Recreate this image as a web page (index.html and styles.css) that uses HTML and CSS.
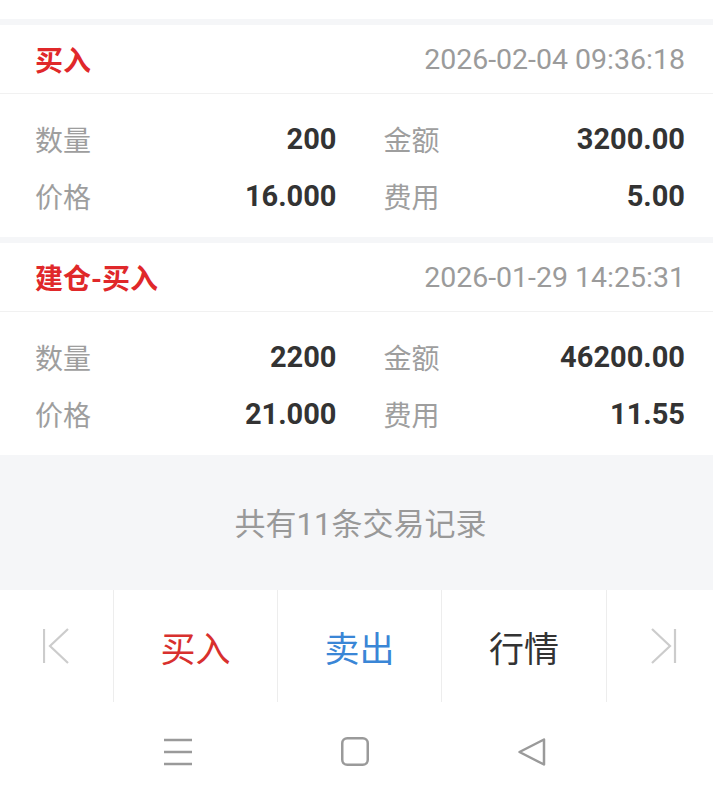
FILE: index.html
```html
<!DOCTYPE html>
<html lang="zh-CN">

<head>
    <meta charset="UTF-8">
    <meta name="viewport" content="width=device-width, initial-scale=1.0">
    <title>交易记录</title>
    <link rel="stylesheet" href="styles.css">
</head>

<body>
    <div class="top-gap"></div>

    <div class="record">
        <div class="record-head">
            <span class="type">买入</span>
            <span class="time">2026-02-04 09:36:18</span>
        </div>
        <div class="record-body">
            <div class="cell"><span class="label">数量</span><span class="value">200</span></div>
            <div class="cell"><span class="label">金额</span><span class="value">3200.00</span></div>
            <div class="cell"><span class="label">价格</span><span class="value">16.000</span></div>
            <div class="cell"><span class="label">费用</span><span class="value">5.00</span></div>
        </div>
    </div>

    <div class="record">
        <div class="record-head">
            <span class="type">建仓-买入</span>
            <span class="time">2026-01-29 14:25:31</span>
        </div>
        <div class="record-body">
            <div class="cell"><span class="label">数量</span><span class="value">2200</span></div>
            <div class="cell"><span class="label">金额</span><span class="value">46200.00</span></div>
            <div class="cell"><span class="label">价格</span><span class="value">21.000</span></div>
            <div class="cell"><span class="label">费用</span><span class="value">11.55</span></div>
        </div>
    </div>

    <div class="summary">共有11条交易记录</div>

    <div class="action-bar">
        <div class="action nav-first">
            <svg width="26" height="36" viewBox="0 0 26 36">
                <line x1="1" y1="1" x2="1" y2="35" />
                <polyline points="25,1 7,18 25,35" />
            </svg>
        </div>
        <div class="action buy">买入</div>
        <div class="action sell">卖出</div>
        <div class="action quote">行情</div>
        <div class="action nav-last">
            <svg width="26" height="36" viewBox="0 0 26 36">
                <polyline points="1,1 19,18 1,35" />
                <line x1="24" y1="1" x2="24" y2="35" />
            </svg>
        </div>
    </div>

    <div class="system-nav">
        <div class="sys-btn">
            <svg width="28" height="28" viewBox="0 0 28 28">
                <line x1="0" y1="2" x2="28" y2="2" />
                <line x1="0" y1="14" x2="28" y2="14" />
                <line x1="0" y1="26" x2="28" y2="26" />
            </svg>
        </div>
        <div class="sys-btn">
            <svg width="28" height="29" viewBox="0 0 28 29">
                <rect x="1.25" y="1.25" width="25.5" height="26.5" rx="5" />
            </svg>
        </div>
        <div class="sys-btn">
            <svg width="28" height="28" viewBox="0 0 28 28">
                <path d="M26 1.5 L1.5 14 L26 26.5 Z" />
            </svg>
        </div>
    </div>
</body>

</html>
```

FILE: styles.css
```css
body {
    font-family: Roboto, "Noto Sans CJK SC", sans-serif;
    margin: 0;
    width: 713px;
    height: 801px;
    background-color: #f5f6f8;
    display: flex;
    flex-direction: column;
    overflow: hidden;
}

.top-gap {
    height: 19px;
    background-color: #ffffff;
}

.record {
    background-color: #ffffff;
    margin-top: 6px;
}

.record-head {
    height: 68px;
    display: flex;
    justify-content: space-between;
    align-items: center;
    padding: 0 28px 0 35px;
    border-bottom: 1px solid #f1f1f1;
}

.type {
    color: #e0282a;
    font-size: 28px;
    font-weight: bold;
}

.time {
    color: #9b9b9b;
    font-size: 28.5px;
}

.record-body {
    display: grid;
    grid-template-columns: 1fr 1fr;
    grid-auto-rows: 57px;
    column-gap: 47px;
    padding: 16px 28px 13px 35px;
}

.cell {
    display: flex;
    justify-content: space-between;
    align-items: center;
}

.label {
    color: #9e9e9e;
    font-size: 28px;
}

.value {
    color: #333333;
    font-size: 29px;
    font-weight: bold;
}

.summary {
    flex-grow: 1;
    display: flex;
    justify-content: center;
    align-items: center;
    color: #999999;
    font-size: 31px;
    padding: 0 0 2px 8px;
}

.action-bar {
    height: 112px;
    display: grid;
    grid-template-columns: 113px 164px 164px 165px 1fr;
    background-color: #ffffff;
}

.action {
    display: flex;
    justify-content: center;
    align-items: center;
    font-size: 35px;
    border-left: 1px solid #ededed;
}

.action svg {
    fill: none;
    stroke: #cccccc;
    stroke-width: 2.2;
}

.nav-first {
    border-left: none;
    justify-content: flex-start;
    padding-left: 43px;
}

.nav-last {
    justify-content: flex-start;
    padding-left: 44px;
}

.buy {
    color: #d8302e;
}

.sell {
    color: #3a86d6;
}

.quote {
    color: #333333;
}

.system-nav {
    height: 99px;
    background-color: #ffffff;
    display: grid;
    grid-template-columns: repeat(3, 177px);
    justify-content: center;
    align-items: center;
    padding-right: 4px;
}

.sys-btn {
    display: flex;
    justify-content: center;
    align-items: center;
}

.sys-btn svg {
    fill: none;
    stroke: #9a9a9a;
    stroke-width: 2.5;
    stroke-linejoin: round;
}
```
